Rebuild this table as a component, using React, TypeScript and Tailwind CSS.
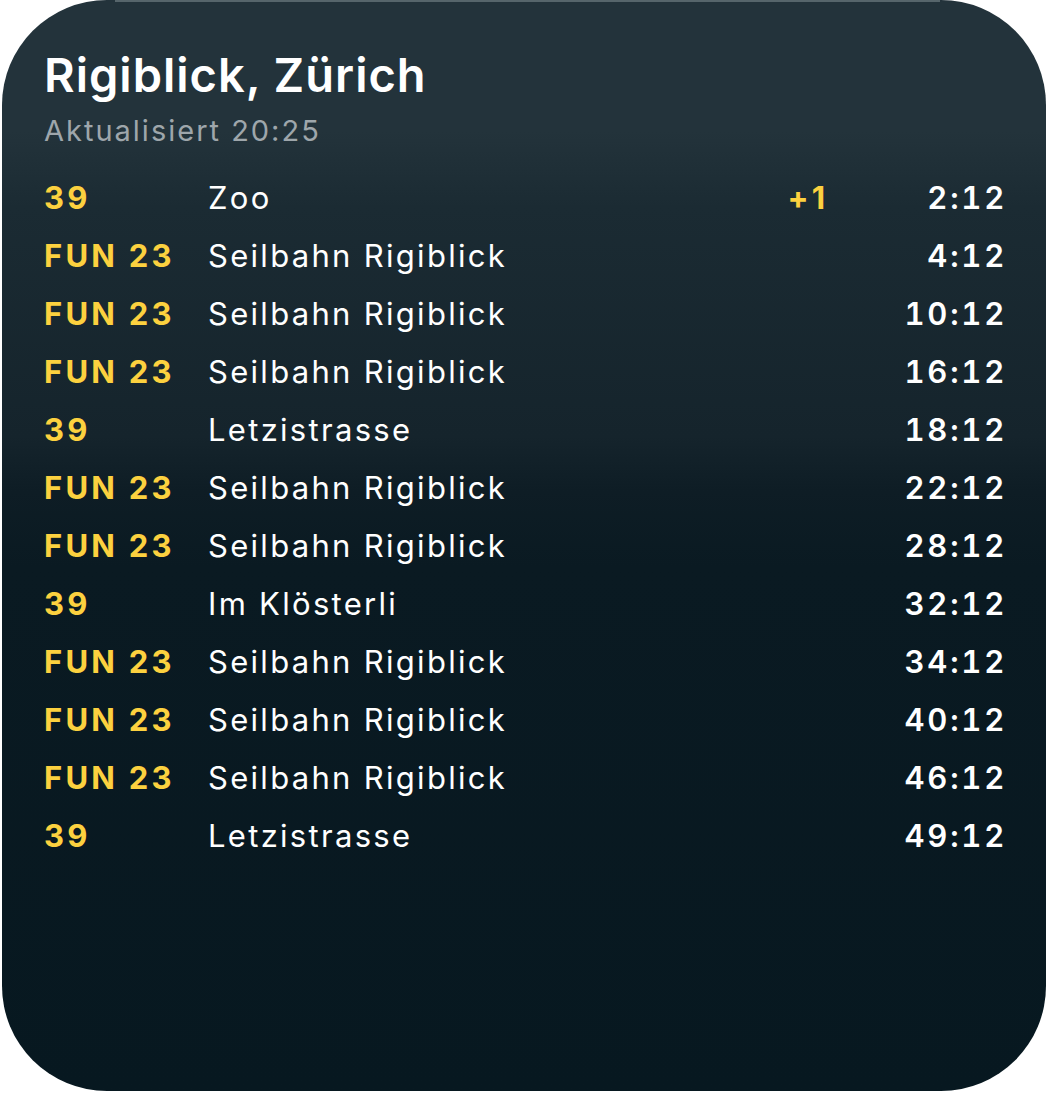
type Departure = {
  line: string;
  destination: string;
  delay?: string;
  time: string;
};

const departures: Departure[] = [
  { line: "39", destination: "Zoo", delay: "+1", time: "2:12" },
  { line: "FUN 23", destination: "Seilbahn Rigiblick", time: "4:12" },
  { line: "FUN 23", destination: "Seilbahn Rigiblick", time: "10:12" },
  { line: "FUN 23", destination: "Seilbahn Rigiblick", time: "16:12" },
  { line: "39", destination: "Letzistrasse", time: "18:12" },
  { line: "FUN 23", destination: "Seilbahn Rigiblick", time: "22:12" },
  { line: "FUN 23", destination: "Seilbahn Rigiblick", time: "28:12" },
  { line: "39", destination: "Im Klösterli", time: "32:12" },
  { line: "FUN 23", destination: "Seilbahn Rigiblick", time: "34:12" },
  { line: "FUN 23", destination: "Seilbahn Rigiblick", time: "40:12" },
  { line: "FUN 23", destination: "Seilbahn Rigiblick", time: "46:12" },
  { line: "39", destination: "Letzistrasse", time: "49:12" },
];

function DepartureRow({ dep }: { dep: Departure }) {
  return (
    <li className="flex h-[58px] items-center text-[31px] leading-[58px]">
      <span className="w-[164px] shrink-0 font-bold tracking-[3.2px] text-[#fcd13f]">{dep.line}</span>
      <span className="flex-1 truncate tracking-[2.3px] text-white">{dep.destination}</span>
      {dep.delay && (
        <span className="-mr-[2px] font-bold tracking-[3px] text-[#fcd13f]">{dep.delay}</span>
      )}
      <span className="-mr-[3px] w-[181px] shrink-0 text-right font-semibold tabular-nums tracking-[2.8px] text-white">
        {dep.time}
      </span>
    </li>
  );
}

export default function App() {
  return (
    <div className="h-[1095px] w-[1049px] bg-white font-['Inter','Noto_Sans',sans-serif]">
      <div className="relative ml-[2px] h-[1091px] w-[1044px] overflow-hidden rounded-[105px] bg-[linear-gradient(180deg,#23333b_0%,#23333b_12%,#1b2b33_19%,#15242c_40%,#0e1d25_45%,#0a1a22_52%,#071820_100%)] pl-[42px] pr-[42px] pt-[47px]">
        <div className="absolute left-[113px] right-[106px] top-0 h-[2px] bg-[#56656b]" />
        <h1 className="text-[47px] font-semibold leading-[56px] tracking-[1px] text-white">
          Rigiblick, Zürich
        </h1>
        <p className="mt-[10px] text-[29px] leading-[36px] tracking-[2px] text-[#9ea6ab]">
          Aktualisiert 20:25
        </p>
        <ul className="mt-[20px]">
          {departures.map((dep, i) => (
            <DepartureRow key={i} dep={dep} />
          ))}
        </ul>
      </div>
    </div>
  );
}
